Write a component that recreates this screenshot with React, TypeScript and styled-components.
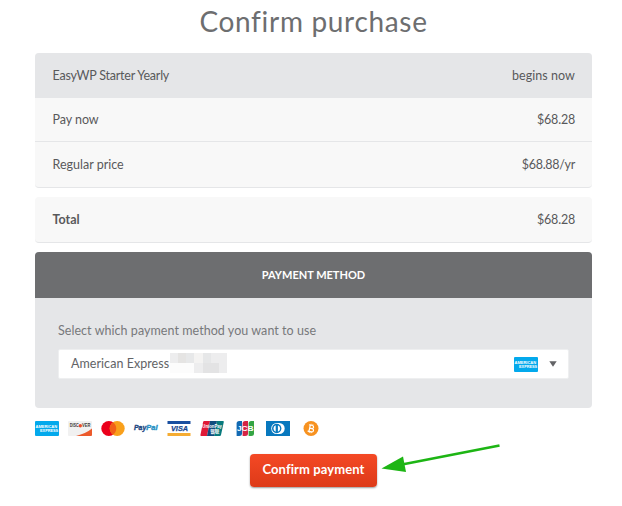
import React from "react";
import styled, { createGlobalStyle } from "styled-components";

const GlobalStyle = createGlobalStyle`
  *, *::before, *::after { box-sizing: border-box; }
  body {
    margin: 0;
    background: #fff;
    color: #58595b;
    font-family: Lato, "Liberation Sans", sans-serif;
    font-size: 12.5px;
  }
`;

const Page = styled.main`
  position: relative;
  display: flex;
  flex-direction: column;
  width: 622px;
  height: 506px;
  padding: 0 30px 0 35px;
  overflow: hidden;
`;

const Title = styled.h1`
  height: 53px;
  margin: 0;
  padding-top: 3px;
  color: #6d6e70;
  font: 400 28px/37px Lato, sans-serif;
  letter-spacing: 0.68px;
  text-align: center;
`;

const Summary = styled.section`
  flex: none;
  margin-bottom: 9px;
  overflow: hidden;
  border-radius: 4px;
  border-bottom: 1px solid #e5e6e8;
  background: #f8f8f8;
`;

const Row = styled.div<{ $head?: boolean; $divided?: boolean; $height?: number }>`
  display: flex;
  align-items: center;
  justify-content: space-between;
  height: ${(p) => p.$height ?? 45}px;
  padding: 0 17px 0 17.5px;
  background: ${(p) => (p.$head ? "#e5e6e8" : "transparent")};
  border-bottom: ${(p) => (p.$divided ? "1px solid #e5e6e8" : "0")};
`;

const Label = styled.span<{ $spacing?: number; $strong?: boolean }>`
  font-weight: ${(p) => (p.$strong ? 700 : 400)};
  letter-spacing: ${(p) => p.$spacing ?? 0}px;
  line-height: 18px;
`;

const Panel = styled.section`
  flex: none;
  height: 156px;
  overflow: hidden;
  border-radius: 4px;
  background: #e5e6e8;
`;

const PanelHeader = styled.h2`
  height: 46px;
  margin: 0;
  background: #6d6e70;
  color: #fff;
  font-size: 11px;
  font-weight: 700;
  line-height: 46px;
  text-align: center;
`;

const PanelBody = styled.div`
  padding: 24px 23px 0;
  color: #77787b;
`;

const Hint = styled.p`
  margin: 0 0 9px;
  line-height: 18px;
  letter-spacing: 0.05px;
`;

const Select = styled.div`
  display: flex;
  align-items: center;
  height: 30px;
  padding: 0 11px 0 12px;
  border: 1px solid #eeeff0;
  border-radius: 2px;
  background: #fff;
  color: #626366;
`;

const Redaction = styled.svg`
  margin: -2px auto 0 1px;
`;

const Caret = styled.svg`
  margin-left: 11px;
`;

const Brands = styled.div`
  display: flex;
  align-items: center;
  gap: 9px;
  height: 15px;
  margin-top: 13px;
`;

const Brand = styled.svg`
  display: block;
  flex: none;
  overflow: visible;
  font-family: "Liberation Sans", sans-serif;
  font-weight: 700;
`;

const ConfirmButton = styled.button`
  width: 127px;
  height: 33px;
  margin: 18px 0 0 215px;
  padding: 0 0 2px;
  border: 0;
  border-radius: 4px;
  background: linear-gradient(#f44925, #dd3a18);
  box-shadow: 0 1px 2px rgba(0, 0, 0, 0.4);
  color: #fff;
  font: 700 13px/31px Lato, sans-serif;
  letter-spacing: 0.1px;
`;

const Arrow = styled.svg`
  position: absolute;
  left: 380px;
  top: 440px;
`;

const Amex = () => (
  <Brand width="24" height="15" viewBox="0 0 24 15">
    <rect width="24" height="15" rx="1" fill="#03a9ec" />
    <g fill="#fff" fontSize="4.3">
      <text x="0.6" y="6.7" textLength="21.5" lengthAdjust="spacingAndGlyphs">AMERICAN</text>
      <text x="5" y="11.2" textLength="18.2" lengthAdjust="spacingAndGlyphs">EXPRESS</text>
    </g>
  </Brand>
);

const Discover = () => (
  <Brand width="24" height="15" viewBox="0 0 24 15">
    <rect width="24" height="15" rx="1" fill="#f1f1f1" />
    <path d="M24 7.5V14q0 1-1 1H8Q18 12.5 24 7.5Z" fill="#ec5a2c" />
    <g fill="#413a38" fontSize="4.8">
      <text x="1.7" y="6.4" textLength="9" lengthAdjust="spacingAndGlyphs">DISC</text>
      <text x="14" y="6.4" textLength="8.4" lengthAdjust="spacingAndGlyphs">VER</text>
    </g>
    <circle cx="12.3" cy="4.7" r="1.7" fill="#ec4a28" />
  </Brand>
);

const Mastercard = () => (
  <Brand width="24" height="15" viewBox="0 0 24 15">
    <circle cx="7.8" cy="7.5" r="7.5" fill="#eb001b" />
    <circle cx="16.2" cy="7.5" r="7.5" fill="#f9a01b" />
    <path d="M12 1.3a7.5 7.5 0 0 1 0 12.4a7.5 7.5 0 0 1 0-12.4Z" fill="#f26018" />
  </Brand>
);

const PayPal = () => (
  <Brand width="24" height="15" viewBox="0 0 24 15">
    <g fontSize="7.2" fontStyle="italic" strokeWidth="0.35">
      <text x="0" y="9.2" fill="#20467f" stroke="#20467f" textLength="12.3" lengthAdjust="spacingAndGlyphs">Pay</text>
      <text x="12.3" y="9.2" fill="#2790c3" stroke="#2790c3" textLength="11.2" lengthAdjust="spacingAndGlyphs">Pal</text>
    </g>
  </Brand>
);

const Visa = () => (
  <Brand width="24" height="15" viewBox="0 0 24 15">
    <rect x="0.5" width="23" height="3" fill="#1a4fa0" />
    <rect x="0.5" y="12" width="23" height="3" fill="#f5ac32" />
    <text x="4" y="10.4" fontSize="7.7" fontStyle="italic" fill="#17458f" stroke="#17458f" strokeWidth="0.25" textLength="17" lengthAdjust="spacingAndGlyphs">VISA</text>
  </Brand>
);

const UnionPay = () => (
  <Brand width="24" height="15" viewBox="0 0 24 15">
    <path d="M4.2 0H10L7 15H1.2q-1 0-.8-1L3.1 1q.2-1 1.1-1Z" fill="#df1937" />
    <path d="M10 0h7l-3 15H7Z" fill="#124b7d" />
    <path d="M17 0h6q1 0 .8 1L21 14q-.2 1-1.2 1H14Z" fill="#087a7d" />
    <g fill="#fff">
      <text x="2.3" y="7.4" fontSize="5.2" textLength="19.7" lengthAdjust="spacingAndGlyphs">UnionPay</text>
      <text x="10.2" y="12" fontSize="4.4" fontFamily="Noto Sans CJK SC" textLength="9" lengthAdjust="spacingAndGlyphs">银联</text>
    </g>
  </Brand>
);

const Jcb = () => (
  <Brand width="24" height="15" viewBox="0 0 24 15">
    <path d="M6.2 0H9v12.5Q9 15 6.2 15H3.6V2.5Q3.6 0 6.2 0Z" fill="#1269b2" />
    <path d="M12.2 0H15v12.5q0 2.5-2.8 2.5H9.6V2.5Q9.6 0 12.2 0Z" fill="#d52345" />
    <path d="M18.2 0H21v12.5q0 2.5-2.8 2.5h-2.6V2.5Q15.6 0 18.2 0Z" fill="#34a544" />
    <text x="3.9" y="9.8" fill="#fff" fontSize="6.5" textLength="16.8" lengthAdjust="spacingAndGlyphs">JCB</text>
  </Brand>
);

const Diners = () => (
  <Brand width="24" height="15" viewBox="0 0 24 15">
    <rect width="24" height="15" fill="#0878be" />
    <path d="M11 2h2.2a5.5 5.5 0 0 1 0 11H11Z" fill="#fff" />
    <circle cx="10.7" cy="7.5" r="5.5" fill="#fff" />
    <circle cx="10.7" cy="7.5" r="4.7" fill="#0878be" />
    <path d="M9.7 4.3a3.4 3.4 0 0 0 0 6.4ZM11.9 4.3a3.4 3.4 0 0 1 0 6.4Z" fill="#fff" />
  </Brand>
);

const Bitcoin = () => (
  <Brand width="24" height="15" viewBox="0 0 24 15">
    <circle cx="12" cy="7.5" r="7.5" fill="#f79220" />
    <g transform="rotate(12 12 7.5)" fill="none" stroke="#fff">
      <path d="M9.2 4.3h3.5a1.5 1.5 0 0 1 0 3.1h-2.2M10.5 7.4h2.7a1.6 1.6 0 0 1 0 3.3H9.2M10.6 4.3v6.4" strokeWidth="1.2" />
      <path d="M11.2 2.9v1.4M13 2.9v1.4M11.2 10.7v1.4M13 10.7v1.4" strokeWidth="0.8" />
    </g>
  </Brand>
);

export default function App() {
  return (
    <>
      <GlobalStyle />
      <Page>
        <Title>Confirm purchase</Title>
        <Summary>
          <Row $head>
            <Label $spacing={-0.22}>EasyWP Starter Yearly</Label>
            <Label $spacing={0.05}>begins now</Label>
          </Row>
          <Row $divided $height={44}>
            <Label $spacing={-0.05}>Pay now</Label>
            <Label $spacing={-0.2}>$68.28</Label>
          </Row>
          <Row>
            <Label>Regular price</Label>
            <Label $spacing={-0.3}>$68.88/yr</Label>
          </Row>
        </Summary>
        <Summary>
          <Row>
            <Label $strong>Total</Label>
            <Label $spacing={-0.2}>$68.28</Label>
          </Row>
        </Summary>
        <Panel>
          <PanelHeader>PAYMENT METHOD</PanelHeader>
          <PanelBody>
            <Hint>Select which payment method you want to use</Hint>
            <Select>
              <Label $spacing={0.05}>American Express</Label>
              <Redaction width="57" height="20" viewBox="0 0 57 20" shapeRendering="crispEdges">
                <path d="M0 0h57v20H0Z" fill="#ededee" />
                <path d="M0 10h24v10H0Z" fill="#fcfcfc" />
                <path d="M8 0h8v10H8Z" fill="#e5e4e3" />
                <path d="M16 0h8v10h-8Z" fill="#e7e8e9" />
                <path d="M24 0h9v10h-9Z" fill="#f4f3f2" />
                <path d="M33 0h8v10h-8Z" fill="#e6e7e8" />
                <path d="M33 10h16v10H33Z" fill="#e3e3e4" />
              </Redaction>
              <Amex />
              <Caret width="8" height="6" viewBox="0 0 8 6">
                <path d="M.3.3h7.4L4 5.8Z" fill="#626366" />
              </Caret>
            </Select>
          </PanelBody>
        </Panel>
        <Brands>
          <Amex />
          <Discover />
          <Mastercard />
          <PayPal />
          <Visa />
          <UnionPay />
          <Jcb />
          <Diners />
          <Bitcoin />
        </Brands>
        <ConfirmButton type="button">Confirm payment</ConfirmButton>
        <Arrow width="122" height="36" viewBox="0 0 122 36" aria-hidden="true">
          <path d="M22 24.5L119.5 5.5" stroke="#1db514" strokeWidth="2.8" />
          <path d="M1.5 28.5L23 16.5 26 32Z" fill="#1db514" />
        </Arrow>
      </Page>
    </>
  );
}
